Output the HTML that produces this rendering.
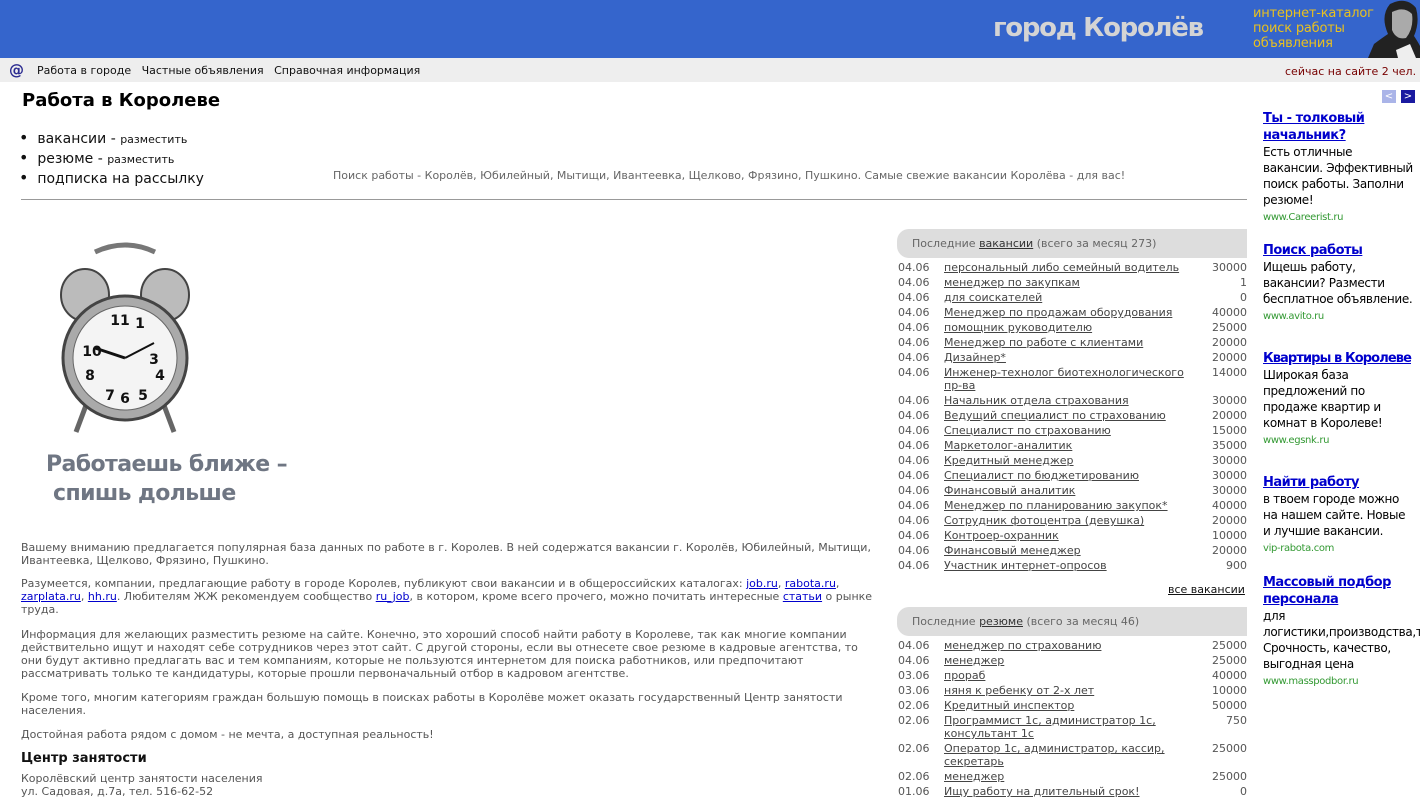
<!DOCTYPE html>
<html><head><meta charset="utf-8">
<style>
body{margin:0;width:1420px;height:796px;overflow:hidden;font-family:"DejaVu Sans","Liberation Sans",sans-serif;font-size:11px;color:#444;background:#fff;position:relative}
a{color:#333}
.hdr{position:absolute;left:0;top:0;width:1420px;height:58px;background:#3565cc}
.nav{position:absolute;left:0;top:58px;width:1420px;height:24px;background:#eee}
.abs{position:absolute}
.tbl{position:absolute;left:897px;width:350px;font-size:11px;color:#555}
.tbl .r{position:relative;height:15px;line-height:15px}
.tbl .d{position:absolute;left:1px}
.tbl .t{position:absolute;left:47px;width:250px}
.tbl .t a{color:#444}
.tbl .s{position:absolute;right:0}
.pill{position:absolute;left:897px;width:350px;height:29px;background:#ddd;border-radius:12px 0 0 12px;line-height:29px;font-size:11px;color:#666;text-indent:15px}
.ad{position:absolute;left:1263px;width:150px;font-size:12px;line-height:16px;color:#000;letter-spacing:-0.35px}
.ad b a{color:#00c;font-size:13px;letter-spacing:-0.5px}
.ad .u{color:#393;font-size:10px}
p{margin:0}
.txt{position:absolute;left:21px;width:870px;font-size:11px;line-height:13px;color:#555}
.txt a{color:#00c}
</style></head><body>
<div class="hdr"></div>
<div class="abs" style="left:993px;top:13px;font-size:26px;font-weight:bold;color:#d4d4d4;letter-spacing:-1.3px">город Королёв</div>
<div class="abs" style="left:1253px;top:6px;font-size:13px;line-height:15px;color:#e8c020;letter-spacing:-0.2px">интернет-каталог<br>поиск работы<br>объявления</div>
<svg class="abs" style="left:1362px;top:0" width="58" height="58"><path d="M6 58 L12 44 Q20 38 26 34 Q18 16 28 4 Q44 -4 54 8 Q58 22 52 36 Q56 42 58 46 L58 58Z" fill="#222"/><path d="M30 12 Q42 6 50 14 Q52 28 44 38 Q34 40 30 30Z" fill="#aaa"/><path d="M34 50 L48 44 L54 58 L36 58Z" fill="#eee"/></svg>
<div class="nav"></div>
<div class="abs" style="left:9px;top:61px;font-size:15px;font-weight:bold;color:#2a2a90">@</div>
<div class="abs" style="left:37px;top:64px;color:#111">Работа в городе &nbsp;&nbsp;Частные объявления &nbsp;&nbsp;Справочная информация</div>
<div class="abs" style="left:1285px;top:65px;color:#700">сейчас на сайте 2 чел.</div>
<div class="abs" style="left:22px;top:90px;font-size:18px;font-weight:bold;color:#000">Работа в Королеве</div>
<div class="abs" style="left:19px;top:129px;font-size:14px;line-height:18px;color:#111">
<div><span style="font-size:16px">•</span> &nbsp;вакансии - <span style="font-size:11px">разместить</span></div>
<div><span style="font-size:16px">•</span> &nbsp;резюме - <span style="font-size:11px">разместить</span></div>
<div><span style="font-size:16px">•</span> &nbsp;подписка на рассылку</div></div>
<div class="abs" style="left:333px;top:169px;color:#666">Поиск работы - Королёв, Юбилейный, Мытищи, Ивантеевка, Щелково, Фрязино, Пушкино. Самые свежие вакансии Королёва - для вас!</div>
<div class="abs" style="left:21px;top:199px;width:1226px;height:1px;background:#999"></div>
<svg class="abs" style="left:50px;top:240px" width="150" height="200">
<line x1="38" y1="160" x2="26" y2="192" stroke="#666" stroke-width="5"/><line x1="112" y1="160" x2="124" y2="192" stroke="#666" stroke-width="5"/>
<path d="M45 12 Q75 -2 105 12" stroke="#777" stroke-width="5" fill="none"/>
<ellipse cx="35" cy="55" rx="24" ry="26" fill="#bbb" stroke="#444" stroke-width="2"/><ellipse cx="115" cy="55" rx="24" ry="26" fill="#bbb" stroke="#444" stroke-width="2"/>
<circle cx="75" cy="118" r="62" fill="#aaa" stroke="#444" stroke-width="3"/>
<circle cx="75" cy="118" r="52" fill="#f4f4f4" stroke="#666" stroke-width="1"/>
<line x1="75" y1="118" x2="45" y2="108" stroke="#111" stroke-width="3"/><line x1="75" y1="118" x2="104" y2="103" stroke="#111" stroke-width="2"/>
<g font-size="14" font-weight="bold" fill="#111" text-anchor="middle"><text x="70" y="85">11</text><text x="90" y="88">1</text><text x="75" y="163">6</text><text x="40" y="140">8</text><text x="110" y="140">4</text><text x="104" y="124">3</text><text x="42" y="116">10</text><text x="60" y="160">7</text><text x="93" y="160">5</text></g>
</svg>
<div class="abs" style="left:46px;top:450px;font-size:22px;line-height:29px;font-weight:bold;color:#6f7683;letter-spacing:-0.6px">Работаешь ближе –<br>&nbsp;спишь дольше</div>
<div class="txt" style="top:541px"><p>Вашему вниманию предлагается популярная база данных по работе в г. Королев. В ней содержатся вакансии г. Королёв, Юбилейный, Мытищи, Ивантеевка, Щелково, Фрязино, Пушкино.</p></div>
<div class="txt" style="top:577px"><p>Разумеется, компании, предлагающие работу в городе Королев, публикуют свои вакансии и в общероссийских каталогах: <a href="#">job.ru</a>, <a href="#">rabota.ru</a>, <a href="#">zarplata.ru</a>, <a href="#">hh.ru</a>. Любителям ЖЖ рекомендуем сообщество <a href="#">ru_job</a>, в котором, кроме всего прочего, можно почитать интересные <a href="#">статьи</a> о рынке труда.</p></div>
<div class="txt" style="top:628px;width:860px"><p>Информация для желающих разместить резюме на сайте. Конечно, это хороший способ найти работу в Королеве, так как многие компании действительно ищут и находят себе сотрудников через этот сайт. С другой стороны, если вы отнесете свое резюме в кадровые агентства, то они будут активно предлагать вас и тем компаниям, которые не пользуются интернетом для поиска работников, или предпочитают рассматривать только те кандидатуры, которые прошли первоначальный отбор в кадровом агентстве.</p></div>
<div class="txt" style="top:691px"><p>Кроме того, многим категориям граждан большую помощь в поисках работы в Королёве может оказать государственный Центр занятости населения.</p></div>
<div class="txt" style="top:728px"><p>Достойная работа рядом с домом - не мечта, а доступная реальность!</p></div>
<div class="abs" style="left:21px;top:751px;font-size:13px;font-weight:bold;color:#111">Центр занятости</div>
<div class="txt" style="top:772px">Королёвский центр занятости населения<br>ул. Садовая, д.7а, тел. 516-62-52</div>

<div class="pill" style="top:229px">Последние <a href="#">вакансии</a> (всего за месяц 273)</div>
<div class="tbl" style="top:260px">
<div class="r"><span class="d">04.06</span><span class="t"><a href="#">персональный либо семейный водитель</a></span><span class="s">30000</span></div>
<div class="r"><span class="d">04.06</span><span class="t"><a href="#">менеджер по закупкам</a></span><span class="s">1</span></div>
<div class="r"><span class="d">04.06</span><span class="t"><a href="#">для соискателей</a></span><span class="s">0</span></div>
<div class="r"><span class="d">04.06</span><span class="t"><a href="#">Менеджер по продажам оборудования</a></span><span class="s">40000</span></div>
<div class="r"><span class="d">04.06</span><span class="t"><a href="#">помощник руководителю</a></span><span class="s">25000</span></div>
<div class="r"><span class="d">04.06</span><span class="t"><a href="#">Менеджер по работе с клиентами</a></span><span class="s">20000</span></div>
<div class="r"><span class="d">04.06</span><span class="t"><a href="#">Дизайнер*</a></span><span class="s">20000</span></div>
<div class="r" style="height:28px"><span class="d">04.06</span><span class="t" style="line-height:13px;top:1px"><a href="#">Инженер-технолог биотехнологического пр-ва</a></span><span class="s">14000</span></div>
<div class="r"><span class="d">04.06</span><span class="t"><a href="#">Начальник отдела страхования</a></span><span class="s">30000</span></div>
<div class="r"><span class="d">04.06</span><span class="t"><a href="#">Ведущий специалист по страхованию</a></span><span class="s">20000</span></div>
<div class="r"><span class="d">04.06</span><span class="t"><a href="#">Специалист по страхованию</a></span><span class="s">15000</span></div>
<div class="r"><span class="d">04.06</span><span class="t"><a href="#">Маркетолог-аналитик</a></span><span class="s">35000</span></div>
<div class="r"><span class="d">04.06</span><span class="t"><a href="#">Кредитный менеджер</a></span><span class="s">30000</span></div>
<div class="r"><span class="d">04.06</span><span class="t"><a href="#">Специалист по бюджетированию</a></span><span class="s">30000</span></div>
<div class="r"><span class="d">04.06</span><span class="t"><a href="#">Финансовый аналитик</a></span><span class="s">30000</span></div>
<div class="r"><span class="d">04.06</span><span class="t"><a href="#">Менеджер по планированию закупок*</a></span><span class="s">40000</span></div>
<div class="r"><span class="d">04.06</span><span class="t"><a href="#">Сотрудник фотоцентра (девушка)</a></span><span class="s">20000</span></div>
<div class="r"><span class="d">04.06</span><span class="t"><a href="#">Контроер-охранник</a></span><span class="s">10000</span></div>
<div class="r"><span class="d">04.06</span><span class="t"><a href="#">Финансовый менеджер</a></span><span class="s">20000</span></div>
<div class="r"><span class="d">04.06</span><span class="t"><a href="#">Участник интернет-опросов</a></span><span class="s">900</span></div>
</div>
<div class="abs" style="left:1168px;top:583px"><a href="#" style="color:#111">все вакансии</a></div>
<div class="pill" style="top:607px">Последние <a href="#">резюме</a> (всего за месяц 46)</div>
<div class="tbl" style="top:638px">
<div class="r"><span class="d">04.06</span><span class="t"><a href="#">менеджер по страхованию</a></span><span class="s">25000</span></div>
<div class="r"><span class="d">04.06</span><span class="t"><a href="#">менеджер</a></span><span class="s">25000</span></div>
<div class="r"><span class="d">03.06</span><span class="t"><a href="#">прораб</a></span><span class="s">40000</span></div>
<div class="r"><span class="d">03.06</span><span class="t"><a href="#">няня к ребенку от 2-х лет</a></span><span class="s">10000</span></div>
<div class="r"><span class="d">02.06</span><span class="t"><a href="#">Кредитный инспектор</a></span><span class="s">50000</span></div>
<div class="r" style="height:28px"><span class="d">02.06</span><span class="t" style="line-height:13px;top:1px"><a href="#">Программист 1с, администратор 1с, консультант 1с</a></span><span class="s">750</span></div>
<div class="r" style="height:28px"><span class="d">02.06</span><span class="t" style="line-height:13px;top:1px"><a href="#">Оператор 1с, администратор, кассир, секретарь</a></span><span class="s">25000</span></div>
<div class="r"><span class="d">02.06</span><span class="t"><a href="#">менеджер</a></span><span class="s">25000</span></div>
<div class="r"><span class="d">01.06</span><span class="t"><a href="#">Ищу работу на длительный срок!</a></span><span class="s">0</span></div>
</div>

<div class="abs" style="left:1382px;top:90px;width:14px;height:13px;background:#aab4e8;color:#fff;font-size:10px;line-height:13px;text-align:center">&lt;</div>
<div class="abs" style="left:1401px;top:90px;width:14px;height:13px;background:#1a1aa0;color:#fff;font-size:10px;line-height:13px;text-align:center">&gt;</div>
<div class="ad" style="top:110px"><b><a href="#">Ты - толковый начальник?</a></b><br>Есть отличные вакансии. Эффективный поиск работы. Заполни резюме!<br><span class="u">www.Careerist.ru</span></div>
<div class="ad" style="top:242px"><b><a href="#">Поиск работы</a></b><br>Ищешь работу, вакансии? Размести бесплатное объявление.<br><span class="u">www.avito.ru</span></div>
<div class="ad" style="top:350px;width:160px"><b><a href="#" style="letter-spacing:-0.9px">Квартиры в Королеве</a></b><br><span style="display:inline-block;width:150px">Широкая база предложений по продаже квартир и комнат в Королеве!</span><br><span class="u">www.egsnk.ru</span></div>
<div class="ad" style="top:474px"><b><a href="#">Найти работу</a></b><br>в твоем городе можно на нашем сайте. Новые и лучшие вакансии.<br><span class="u">vip-rabota.com</span></div>
<div class="ad" style="top:574px"><b><a href="#">Массовый подбор персонала</a></b><br>для логистики,производства,торговли. Срочность, качество, выгодная цена<br><span class="u">www.masspodbor.ru</span></div>
</body></html>
